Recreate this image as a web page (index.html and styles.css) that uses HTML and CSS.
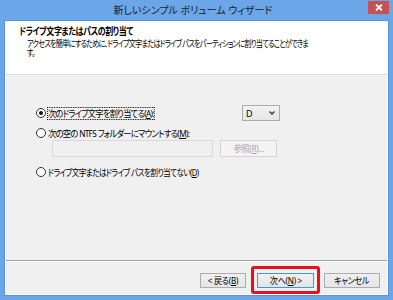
FILE: index.html
```html
<!DOCTYPE html>
<html lang="ja">

<head>
    <meta charset="UTF-8">
    <title>新しいシンプル ボリューム ウィザード</title>
    <link rel="stylesheet" href="styles.css">
</head>

<body>
    <div class="window">
        <div class="titlebar">
            <div class="title">新しいシンプル ボリューム ウィザード</div>
            <div class="close">
                <svg width="8" height="7" viewBox="0 0 8 7">
                    <path d="M1 0.5 L7 6.5 M7 0.5 L1 6.5" stroke="#fff" stroke-width="1.8" fill="none" />
                </svg>
            </div>
        </div>

        <div class="client">
            <div class="header">
                <div class="header-title"><span class="squeeze sq-title">ドライブ文字またはパスの割り当て</span></div>
                <div class="header-text"><span class="squeeze sq-text">アクセスを簡単にするために、ドライブ文字またはドライブ パスをパーティションに割り当てることができま<br>す。</span></div>
            </div>

            <div class="content">
                <div class="option option-drive">
                    <span class="radio checked"></span>
                    <span class="label-box"><span class="label squeeze sq-a focused">次のドライブ文字を割り当てる(<u>A</u>):</span></span>
                    <div class="select">
                        <span>D</span>
                        <svg width="6" height="4" viewBox="0 0 6 4">
                            <path d="M0.5 0.5 L3 3 L5.5 0.5" stroke="#333" stroke-width="1.3" fill="none" />
                        </svg>
                    </div>
                </div>

                <div class="option option-folder">
                    <span class="radio"></span>
                    <span class="label squeeze sq-m">次の空の NTFS フォルダーにマウントする(<u>M</u>):</span>
                </div>
                <div class="folder-row">
                    <div class="field"></div>
                    <div class="button disabled"><span class="squeeze sq-btn">参照(<u>R</u>)...</span></div>
                </div>

                <div class="option option-none">
                    <span class="radio"></span>
                    <span class="label squeeze sq-d">ドライブ文字またはドライブ パスを割り当てない(<u>D</u>)</span>
                </div>
            </div>

            <div class="footer">
                <div class="button back"><span class="squeeze sq-btn">&lt; 戻る(<u>B</u>)</span></div>
                <div class="button next"><span class="squeeze sq-btn">次へ(<u>N</u>) &gt;</span><span class="highlight"></span></div>
                <div class="button cancel"><span class="squeeze sq-btn">キャンセル</span></div>
            </div>
        </div>
    </div>
</body>

</html>
```

FILE: styles.css
```css
body {
    margin: 0;
    font-family: "Noto Sans", "Noto Sans CJK JP", sans-serif;
    font-feature-settings: "palt";
    color: #000;
}

.window {
    width: 393px;
    height: 300px;
    background-color: #6ba6e8;
    /* Windows 8 light blue frame */
    display: flex;
    flex-direction: column;
}

.titlebar {
    height: 21px;
    display: flex;
    align-items: flex-start;
}

.title {
    flex: 1;
    padding-left: 18px;
    text-align: center;
    font-size: 10px;
    line-height: 21px;
    color: #222;
}

.close {
    width: 21px;
    height: 13px;
    margin: 1px 4px 0 0;
    background-color: #c75050;
    display: flex;
    align-items: center;
    justify-content: center;
}

.client {
    flex: 1;
    margin: 0 5px 5px 5px;
    background-color: #f0f0f0;
    border: 1px solid #fff;
    box-shadow: 0 0 0 1px #5a93d6;
    display: flex;
    flex-direction: column;
}

/* Meiryo UI is much narrower than Noto, so long texts are squeezed */
.squeeze {
    display: inline-block;
    white-space: nowrap;
    transform-origin: 0 50%;
}

.sq-title {
    transform: scaleX(0.8);
}

.sq-text {
    transform: scaleX(0.8);
    transform-origin: 0 0;
}

.sq-a {
    transform: scaleX(0.86);
}

.sq-m {
    transform: scaleX(0.87);
}

.sq-d {
    transform: scaleX(0.81);
}

.sq-btn {
    transform: scaleX(0.9);
    transform-origin: 50% 50%;
}

.header {
    height: 53px;
    background-color: #fff;
    border-bottom: 1px solid #dcdcdc;
    padding: 3px 0 0 13px;
    box-sizing: border-box;
}

.header-title {
    font-size: 10px;
    font-weight: bold;
    line-height: 12px;
    letter-spacing: -0.5px;
}

.header-text {
    margin-top: 1.5px;
    padding-left: 8px;
    font-size: 9px;
    line-height: 9.5px;
    letter-spacing: -1px;
}

.content {
    flex: 1;
    padding: 30px 0 0 30px;
    font-size: 9.5px;
    letter-spacing: -0.8px;
}

.option {
    display: flex;
    align-items: center;
    height: 12px;
}

.option-drive {
    height: 16px;
}

.option-folder {
    margin-top: 6px;
}

.option-none {
    margin-top: 9px;
}

.radio {
    width: 8px;
    height: 8px;
    border: 1px solid #333;
    border-radius: 50%;
    background-color: #fff;
    margin-right: 2px;
    display: flex;
    align-items: center;
    justify-content: center;
    flex-shrink: 0;
}

.radio.checked::after {
    content: "";
    width: 4px;
    height: 4px;
    border-radius: 50%;
    background-color: #111;
}

.label {
    line-height: 11px;
}

.label-box {
    width: 194px;
}

.focused {
    outline: 1px dotted #000;
}

.select {
    width: 38px;
    height: 16px;
    box-sizing: border-box;
    border: 1px solid #acacac;
    background: linear-gradient(#f2f2f2, #e6e6e6);
    display: flex;
    align-items: center;
    justify-content: space-between;
    padding: 0 4px 0 3px;
    font-size: 9px;
    letter-spacing: 0;
}

.folder-row {
    display: flex;
    gap: 7px;
    margin-top: 1px;
    padding-left: 16px;
}

.field {
    width: 161px;
    height: 17px;
    box-sizing: border-box;
    border: 1px solid #d9d9d9;
    background-color: #f0f0f0;
}

.button {
    height: 15px;
    box-sizing: border-box;
    border: 1px solid #acacac;
    background: linear-gradient(#f0f0f0, #e5e5e5);
    display: flex;
    align-items: center;
    justify-content: center;
    font-size: 9px;
    letter-spacing: -0.3px;
    position: relative;
}

.button.disabled {
    width: 57px;
    height: 17px;
    border-color: #d5d5d5;
    background: #f4f4f4;
    color: #a3a3a3;
}

.footer {
    height: 34px;
    box-sizing: border-box;
    border-top: 1px solid #a0a0a0;
    box-shadow: inset 0 1px #fff;
    padding: 12px 7px 0 0;
    display: flex;
    justify-content: flex-end;
}

.back {
    width: 46px;
}

.next {
    width: 57px;
    margin-left: 11px;
    border-color: #3399ff;
}

.cancel {
    width: 56px;
    margin-left: 10px;
}

.highlight {
    position: absolute;
    top: -8px;
    left: -7px;
    right: -7px;
    bottom: -7px;
    border: 3px solid #e8111b;
    border-radius: 3px;
}
```
